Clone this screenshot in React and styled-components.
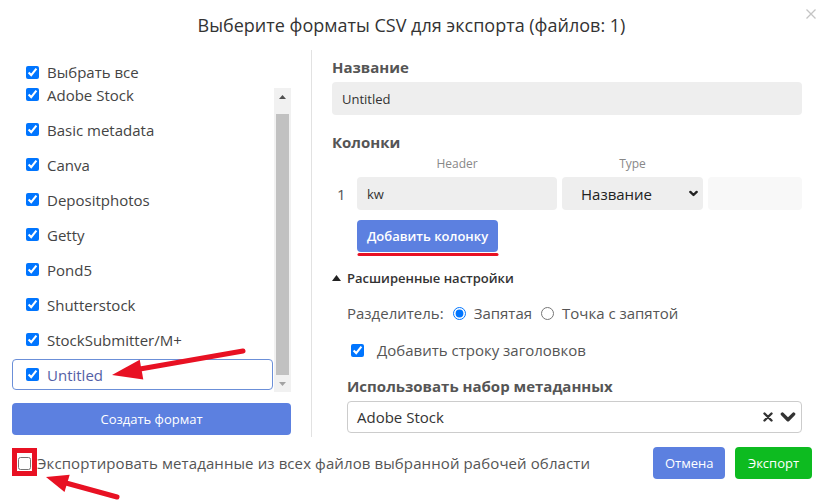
import { useLayoutEffect, useRef, useState } from 'react';
import styled, { createGlobalStyle } from 'styled-components';

const GlobalStyle = createGlobalStyle`
    html, body {
        margin: 0;
        padding: 0;
        background: #fff;
    }
    body {
        font-family: "Open Sans", "Noto Sans", sans-serif;
        color: #444;
    }
    * {
        box-sizing: border-box;
    }
`;

const Modal = styled.div`
    position: relative;
    width: 823px;
    height: 504px;
    overflow: hidden;
    display: flex;
    flex-direction: column;
`;

const Header = styled.header`
    height: 50px;
    display: grid;
    grid-template-columns: 1fr auto 1fr;
    align-items: center;
`;

const Title = styled.h2`
    grid-column: 2;
    margin: 0;
    font-size: 18px;
    font-weight: 500;
    color: #333;
`;

const CloseButton = styled.button`
    grid-column: 3;
    justify-self: end;
    align-self: start;
    margin: 9px 7px 0 0;
    padding: 0;
    width: 10px;
    height: 10px;
    border: none;
    background: transparent;
    display: flex;
`;

const Body = styled.div`
    height: 387px;
    display: grid;
    grid-template-columns: 279px 1px 470px;
    column-gap: 20px;
    padding: 0 21px 0 12px;
`;

const LeftColumn = styled.div`
    display: flex;
    flex-direction: column;
    padding-top: 12px;
`;

const Divider = styled.div`
    background: #e2e2e2;
`;

const CheckRow = styled.label`
    display: flex;
    align-items: center;
    gap: 8px;
    height: 20px;
    padding-left: 14px;
    font-size: 15px;
    color: #444;
`;

const Check = styled.input.attrs({ type: 'checkbox' })`
    margin: 0;
    width: 13px;
    height: 13px;
    accent-color: #0075ff;
    flex-shrink: 0;
`;

const ListFrame = styled.div`
    margin-top: 6px;
    height: 304px;
    display: flex;
`;

const FormatList = styled.ul`
    flex: 1;
    list-style: none;
    margin: 0;
    padding: 0;
    display: flex;
    flex-direction: column;
    overflow: hidden;
`;

const FormatItem = styled.li`
    flex-shrink: 0;
    display: flex;
    align-items: center;
    gap: 8px;
    height: 31px;
    margin: 2px 1px 2px 0;
    padding-left: 13px;
    border: 1px solid ${p => (p.$selected ? '#6b8fd8' : 'transparent')};
    border-radius: 4px;
    font-size: 15px;
    color: ${p => (p.$selected ? '#5461a6' : '#444')};
    cursor: pointer;
`;

const ScrollTrack = styled.div`
    width: 17px;
    display: flex;
    flex-direction: column;
    background: #f1f1f1;
`;

const ScrollArrow = styled.div`
    height: 17px;
    flex-shrink: 0;
    display: flex;
    align-items: center;
    justify-content: center;
`;

const ThumbArea = styled.div`
    flex: 1;
    padding: 0 2px;
`;

const Thumb = styled.div`
    background: #c1c1c1;
`;

const BlueButton = styled.button`
    height: 32px;
    padding: 0 12px;
    border: none;
    border-radius: 4px;
    background: ${p => (p.$green ? '#0dbb20' : '#5c80e0')};
    color: #fff;
    font-family: inherit;
    font-size: 13px;
    font-weight: ${p => (p.$bold ? 600 : 400)};
    white-space: nowrap;
    cursor: pointer;
`;

const CreateButton = styled(BlueButton)`
    margin-top: 11px;
    width: 100%;
`;

const RightColumn = styled.div`
    display: flex;
    flex-direction: column;
    padding-top: 7px;
`;

const Label = styled.div`
    font-size: 15px;
    font-weight: 700;
    line-height: 20px;
    color: #555;
    margin-top: ${p => p.$top || 0}px;
`;

const Field = styled.div`
    height: 33px;
    margin-top: 5px;
    padding: 0 10px;
    display: flex;
    align-items: center;
    border-radius: 4px;
    background: ${p => p.$bg || '#eee'};
    font-size: 13px;
    color: #333;
`;

const ColumnsGrid = styled.div`
    display: grid;
    grid-template-columns: 25px 200px 141px 94px;
    column-gap: 5px;
    margin-left: -5px;
`;

const ColumnHeads = styled(ColumnsGrid)`
    margin-top: 4px;
    line-height: 16px;
    font-size: 12px;
    color: #888;
    text-align: center;
`;

const ColumnRow = styled(ColumnsGrid)`
    margin-top: 5px;
    height: 33px;
    align-items: center;
`;

const RowNumber = styled.span`
    font-size: 15px;
    color: #555;
    padding-left: 10px;
`;

const CellField = styled(Field)`
    margin-top: 0;
`;

const TypeSelect = styled(CellField)`
    justify-content: space-between;
    padding: 0 5px 0 19px;
    font-size: 15px;
    color: #222;
`;

const AddButton = styled(BlueButton)`
    align-self: flex-start;
    margin: 10px 0 0 25px;
    width: 141px;
    padding: 0 6px;
`;

const Toggle = styled.div`
    margin-top: 17px;
    display: flex;
    align-items: center;
    gap: 6px;
    height: 18px;
    font-size: 13px;
    font-weight: 600;
    color: #333;
`;

const Advanced = styled.div`
    display: flex;
    flex-direction: column;
    padding-left: 15px;
`;

const SeparatorRow = styled.div`
    margin-top: 16px;
    height: 20px;
    display: flex;
    align-items: center;
    gap: 9px;
    font-size: 15px;
    color: #555;
`;

const RadioOption = styled.label`
    display: flex;
    align-items: center;
    gap: 8px;
`;

const Radio = styled.input.attrs({ type: 'radio', name: 'sep' })`
    margin: 0;
    width: 13px;
    height: 13px;
    accent-color: #0075ff;
`;

const HeaderCheck = styled(CheckRow)`
    margin-top: 17px;
    padding-left: 4px;
    gap: 13px;
    color: #555;
`;

const MetaSelect = styled.div`
    margin-top: 5px;
    height: 32px;
    padding: 0 5px 0 9px;
    display: flex;
    align-items: center;
    justify-content: space-between;
    border: 1px solid #ccc;
    border-radius: 4px;
    font-size: 15px;
    color: #333;
`;

const SelectIcons = styled.div`
    display: flex;
    align-items: center;
    gap: 7px;
`;

const Footer = styled.footer`
    height: 52px;
    display: flex;
    align-items: center;
    padding: 0 11px 0 18px;
`;

const FooterCheck = styled.label`
    flex: 1;
    display: flex;
    align-items: center;
    gap: 6px;
    font-size: 15px;
    letter-spacing: 0.1px;
    color: #555;
`;

const PlainCheck = styled.input.attrs({ type: 'checkbox' })`
    margin: 0;
    width: 13px;
    height: 13px;
    flex-shrink: 0;
`;

const Actions = styled.div`
    display: flex;
    gap: 10px;
`;

const Annotations = styled.svg`
    position: absolute;
    inset: 0;
    pointer-events: none;
`;

const formats = [
    'Adobe Stock',
    'Basic metadata',
    'Canva',
    'Depositphotos',
    'Getty',
    'Pond5',
    'Shutterstock',
    'StockSubmitter/M+',
    'Untitled',
];

const ARROW_SIZE = 17;

const Chevron = ({ size = 9, stroke = 2.6, color = '#222' }) => (
    <svg width={size} height={size} viewBox="0 0 10 10">
        <path d="M1.5 3.2 L5 6.7 L8.5 3.2" fill="none" stroke={color} strokeWidth={stroke} strokeLinecap="round" strokeLinejoin="round" />
    </svg>
);

const Arrow = ({ up, color }) => (
    <svg width="7" height="4" viewBox="0 0 7 4">
        <path d={up ? 'M3.5 0 L7 4 L0 4 Z' : 'M0 0 L7 0 L3.5 4 Z'} fill={color} />
    </svg>
);

export default function App() {
    const listRef = useRef(null);
    const [thumb, setThumb] = useState({ top: 0, height: 0 });

    useLayoutEffect(() => {
        const el = listRef.current;
        if (!el) return;
        el.scrollTop = el.scrollHeight;
        const track = el.clientHeight - ARROW_SIZE * 2;
        setThumb({
            top: Math.round((el.scrollTop / el.scrollHeight) * track),
            height: Math.round((el.clientHeight / el.scrollHeight) * track),
        });
    }, []);

    return (
        <Modal>
            <GlobalStyle />
            <Header>
                <Title>Выберите форматы CSV для экспорта (файлов: 1)</Title>
                <CloseButton aria-label="Закрыть">
                    <svg width="10" height="10" viewBox="0 0 10 10">
                        <path d="M0.5 0.5 L9.5 9.5 M9.5 0.5 L0.5 9.5" stroke="#c4c4c4" strokeWidth="1.3" />
                    </svg>
                </CloseButton>
            </Header>

            <Body>
                <LeftColumn>
                    <CheckRow>
                        <Check defaultChecked />
                        Выбрать все
                    </CheckRow>
                    <ListFrame>
                        <FormatList ref={listRef}>
                            {formats.map(name => (
                                <FormatItem key={name} $selected={name === 'Untitled'}>
                                    <Check defaultChecked />
                                    {name}
                                </FormatItem>
                            ))}
                        </FormatList>
                        <ScrollTrack>
                            <ScrollArrow>
                                <Arrow up color="#505050" />
                            </ScrollArrow>
                            <ThumbArea>
                                <Thumb style={{ marginTop: thumb.top, height: thumb.height }} />
                            </ThumbArea>
                            <ScrollArrow>
                                <Arrow color="#a3a3a3" />
                            </ScrollArrow>
                        </ScrollTrack>
                    </ListFrame>
                    <CreateButton>Создать формат</CreateButton>
                </LeftColumn>

                <Divider />

                <RightColumn>
                    <Label>Название</Label>
                    <Field>Untitled</Field>

                    <Label $top={17}>Колонки</Label>
                    <ColumnHeads>
                        <span />
                        <span>Header</span>
                        <span>Type</span>
                        <span />
                    </ColumnHeads>
                    <ColumnRow>
                        <RowNumber>1</RowNumber>
                        <CellField>kw</CellField>
                        <TypeSelect>
                            Название
                            <Chevron />
                        </TypeSelect>
                        <CellField $bg="#f8f8f8" />
                    </ColumnRow>
                    <AddButton $bold>Добавить колонку</AddButton>

                    <Toggle>
                        <svg width="9" height="6" viewBox="0 0 9 6">
                            <path d="M4.5 0 L9 6 L0 6 Z" fill="#222" />
                        </svg>
                        Расширенные настройки
                    </Toggle>
                    <Advanced>
                        <SeparatorRow>
                            Разделитель:
                            <RadioOption>
                                <Radio defaultChecked />
                                Запятая
                            </RadioOption>
                            <RadioOption>
                                <Radio />
                                Точка с запятой
                            </RadioOption>
                        </SeparatorRow>
                        <HeaderCheck>
                            <Check defaultChecked />
                            Добавить строку заголовков
                        </HeaderCheck>
                        <Label $top={16}>Использовать набор метаданных</Label>
                        <MetaSelect>
                            Adobe Stock
                            <SelectIcons>
                                <svg width="10" height="10" viewBox="0 0 10 10">
                                    <path d="M1.5 1.5 L8.5 8.5 M8.5 1.5 L1.5 8.5" stroke="#333" strokeWidth="2.4" strokeLinecap="round" />
                                </svg>
                                <Chevron size={16} stroke={2.2} color="#333" />
                            </SelectIcons>
                        </MetaSelect>
                    </Advanced>
                </RightColumn>
            </Body>

            <Footer>
                <FooterCheck>
                    <PlainCheck />
                    Экспортировать метаданные из всех файлов выбранной рабочей области
                </FooterCheck>
                <Actions>
                    <BlueButton style={{ width: 72 }}>Отмена</BlueButton>
                    <BlueButton $green style={{ width: 77 }}>Экспорт</BlueButton>
                </Actions>
            </Footer>

            <Annotations width="823" height="504" viewBox="0 0 823 504">
                <g fill="#e81123" stroke="#e81123" strokeLinecap="round">
                    <line x1="243" y1="351" x2="140" y2="369" strokeWidth="5" />
                    <polygon points="112,375 139.7,359.8 143.3,379.5" stroke="none" />
                    <line x1="117" y1="497" x2="66" y2="483" strokeWidth="5" />
                    <polygon points="46,477 69.7,474.8 64.5,492" stroke="none" />
                    <rect x="14.5" y="450.5" width="20" height="23" fill="none" strokeWidth="5" strokeLinecap="butt" />
                    <line x1="359" y1="254.5" x2="497" y2="254.5" strokeWidth="3" />
                </g>
            </Annotations>
        </Modal>
    );
}
